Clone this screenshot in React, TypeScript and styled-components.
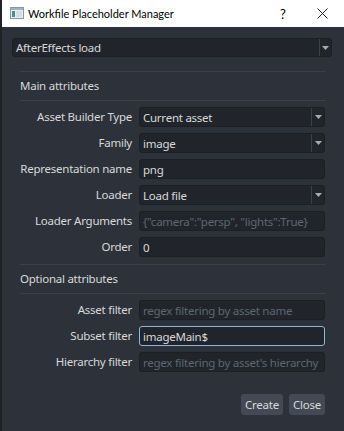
import styled, { createGlobalStyle } from "styled-components";

const GlobalStyle = createGlobalStyle`
  html, body {
    margin: 0;
    padding: 0;
    background: #2c313a;
  }
  * {
    box-sizing: border-box;
  }
`;

interface Field {
  label: string;
  value?: string;
  placeholder?: string;
  combo?: boolean;
  focused?: boolean;
}

const mainFields: Field[] = [
  { label: "Asset Builder Type", value: "Current asset", combo: true },
  { label: "Family", value: "image", combo: true },
  { label: "Representation name", value: "png" },
  { label: "Loader", value: "Load file", combo: true },
  { label: "Loader Arguments", placeholder: '{"camera":"persp", "lights":True}' },
  { label: "Order", value: "0" },
];

const optionalFields: Field[] = [
  { label: "Asset filter", placeholder: "regex filtering by asset name" },
  { label: "Subset filter", value: "imageMain$", focused: true },
  { label: "Hierarchy filter", placeholder: "regex filtering by asset's hierarchy" },
];

const Arrow = () => (
  <svg width="7" height="4" viewBox="0 0 7 4">
    <path d="M0 0 H7 L3.5 4 Z" fill="#a6abb3" />
  </svg>
);

const Combo = ({ value, wide }: { value: string; wide?: boolean }) => (
  <ComboBox $wide={wide}>
    <ComboText>{value}</ComboText>
    <ComboButton $wide={wide}>
      <Arrow />
    </ComboButton>
  </ComboBox>
);

const FieldRows = ({ fields }: { fields: Field[] }) => (
  <Form>
    {fields.map((f) => (
      <Row key={f.label}>
        <Label>{f.label}</Label>
        {f.combo ? (
          <Combo value={f.value || ""} />
        ) : (
          <Input $focused={f.focused} $placeholder={!f.value}>
            {f.value || f.placeholder}
          </Input>
        )}
      </Row>
    ))}
  </Form>
);

const App = () => {
  return (
    <Window>
      <GlobalStyle />
      <TitleBar>
        <AppIcon>
          <svg width="14" height="12" viewBox="0 0 14 12">
            <rect x="0.5" y="0.5" width="13" height="11" fill="#e8eef2" stroke="#8a97a3" />
            <rect x="1" y="1" width="12" height="2" fill="#9fb3c4" />
            <rect x="2" y="4" width="3" height="6" fill="#4d8f8a" />
            <rect x="6" y="4" width="6" height="6" fill="#d5dde3" />
          </svg>
        </AppIcon>
        <Title>Workfile Placeholder Manager</Title>
        <TitleButton>?</TitleButton>
        <CloseButton>
          <svg width="11" height="11" viewBox="0 0 11 11">
            <path d="M0.5 0.5 L10.5 10.5 M10.5 0.5 L0.5 10.5" stroke="#222" strokeWidth="1" />
          </svg>
        </CloseButton>
      </TitleBar>
      <Content>
        <Combo value="AfterEffects load" wide />
        <Attributes>
          <Line />
          <SectionTitle>Main attributes</SectionTitle>
          <Line />
          <FieldRows fields={mainFields} />
          <Line />
          <SectionTitle>Optional attributes</SectionTitle>
          <Line />
          <FieldRows fields={optionalFields} />
        </Attributes>
        <Buttons>
          <Button $width={42}>Create</Button>
          <Button $width={36}>Close</Button>
        </Buttons>
      </Content>
    </Window>
  );
};

const Window = styled.div`
  width: 344px;
  height: 431px;
  background: #2c313a;
  border-left: 2px solid #1f2227;
  font-family: "Noto Sans", "Open Sans", sans-serif;
  font-size: 11.5px;
  letter-spacing: -0.25px;
  color: #d9d9d9;
  overflow: hidden;
`;

const TitleBar = styled.div`
  height: 27px;
  background: #ffffff;
  display: flex;
  align-items: center;
  padding-left: 8px;
  color: #000;
  font-family: Lato, "Noto Sans", sans-serif;
  font-size: 11px;
  letter-spacing: 0;
`;

const AppIcon = styled.div`
  width: 14px;
  height: 12px;
  display: flex;
  margin-right: 3px;
  margin-top: -1px;
`;

const Title = styled.div`
  flex: 1;
  margin-left: 1px;
`;

const TitleButton = styled.div`
  width: 20px;
  text-align: center;
  font-size: 13px;
  margin-right: 24px;
`;

const CloseButton = styled.div`
  width: 11px;
  display: flex;
  margin-right: 16px;
`;

const Content = styled.div`
  padding: 11px 12px 0 10px;
  display: flex;
  flex-direction: column;
`;

const ComboBox = styled.div<{ $wide?: boolean }>`
  height: ${({ $wide }) => ($wide ? "19px" : "20px")};
  background: #21252b;
  border: 1px solid #1c1f24;
  border-radius: 3px;
  display: flex;
  align-items: stretch;
`;

const ComboText = styled.div`
  flex: 1;
  padding-left: 3px;
  display: flex;
  align-items: center;
  white-space: nowrap;
`;

const ComboButton = styled.div<{ $wide?: boolean }>`
  width: ${({ $wide }) => ($wide ? "12px" : "13px")};
  border-left: 1px solid #3a404b;
  display: flex;
  align-items: center;
  justify-content: center;
`;

const Attributes = styled.div`
  margin: 14px 6px 0 8px;
  display: flex;
  flex-direction: column;
`;

const Line = styled.div`
  height: 1px;
  background: #3b414c;
`;

const SectionTitle = styled.div`
  height: 28px;
  line-height: 28px;
`;

const Form = styled.div`
  display: grid;
  grid-template-columns: 112px 1fr;
  column-gap: 7px;
  row-gap: 6px;
  margin: 6px 1px 7px 0;
`;

const Row = styled.div`
  display: contents;
`;

const Label = styled.div`
  text-align: right;
  height: 20px;
  line-height: 20px;
  white-space: nowrap;
`;

const Input = styled.div<{ $focused?: boolean; $placeholder?: boolean }>`
  height: 20px;
  background: #21252b;
  border: 1px solid ${({ $focused }) => ($focused ? "#8ab8dd" : "#1c1f24")};
  border-radius: 3px;
  padding-left: 3px;
  display: flex;
  align-items: center;
  white-space: nowrap;
  overflow: hidden;
  color: ${({ $placeholder }) => ($placeholder ? "#5e6673" : "#d9d9d9")};
`;

const Buttons = styled.div`
  display: flex;
  justify-content: flex-end;
  gap: 6px;
  margin: 15px 7px 0 0;
`;

const Button = styled.div<{ $width: number }>`
  width: ${({ $width }) => $width}px;
  height: 21px;
  background: #434a56;
  border-radius: 3px;
  display: flex;
  align-items: center;
  justify-content: center;
  color: #d9d9d9;
`;

export default App;
